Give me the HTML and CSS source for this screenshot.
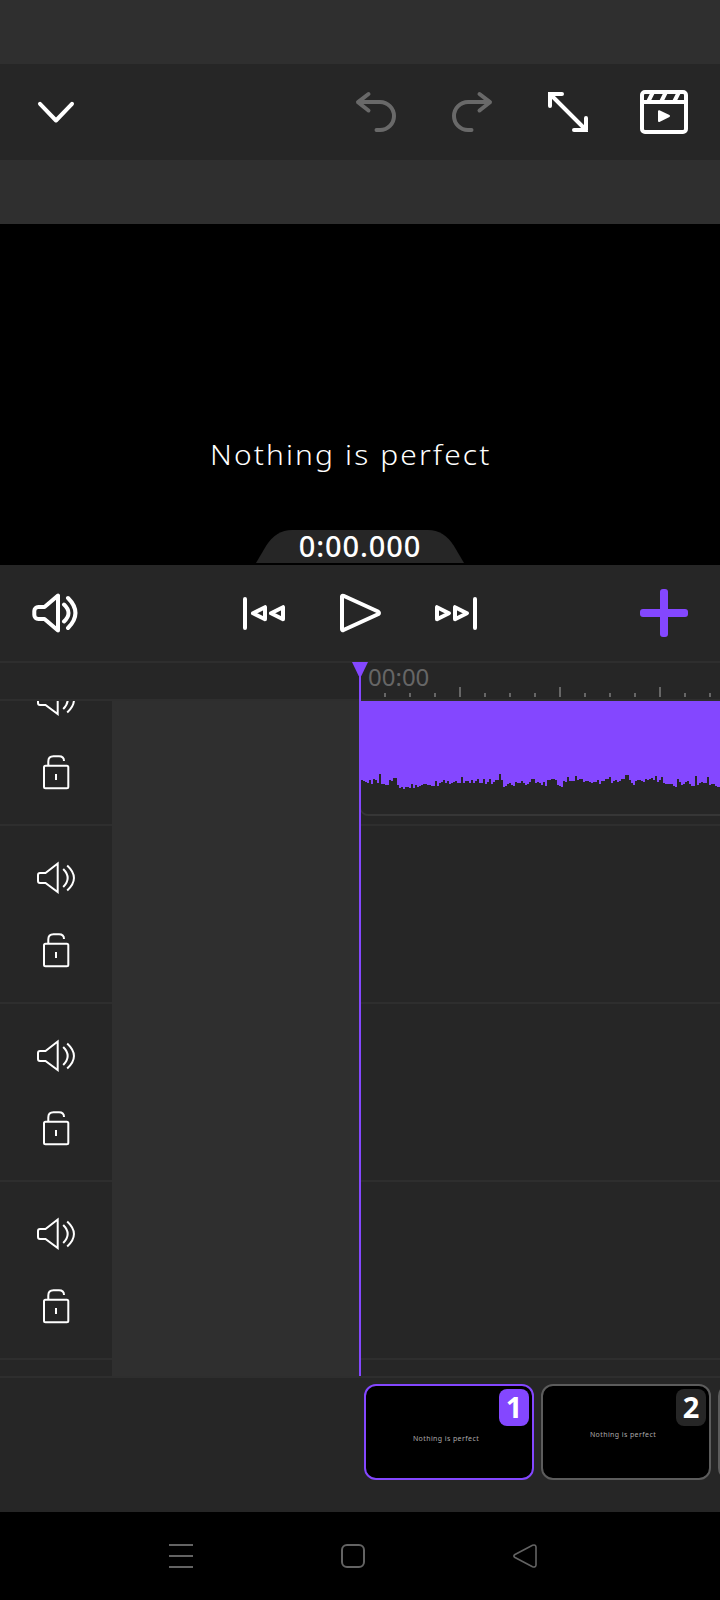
FILE: index.html
```html
<!DOCTYPE html>
<html lang="en">
<head>
    <meta charset="UTF-8">
    <meta name="viewport" content="width=device-width, initial-scale=1.0">
    <title>Video editor</title>
    <link rel="stylesheet" href="styles.css">
</head>
<body>
    <svg class="symbols">
        <symbol id="track-sound" viewBox="0 0 48 48">
            <path d="M25.700 9.500V38L13.500 29H8a2 2 0 0 1-2-2v-6a2 2 0 0 1 2-2h5.500zM31.200 15q9 9 0 18M35.200 11.500q13.500 12.500 0 25"/>
        </symbol>
        <symbol id="track-lock" viewBox="0 0 48 48">
            <rect x="12" y="17.700" width="24.300" height="22.600" rx="1.500"/>
            <path d="M16.300 18v-4.500q0-5.200 5.200-5.200h5.500q5 0 5 4.700M24 26v6"/>
        </symbol>
    </svg>

    <div class="status-bar"></div>

    <header class="toolbar">
        <button class="tool"><svg class="icon" viewBox="0 0 48 48"><path d="M8 15.800L24 32.500L40 15.800"/></svg></button>
        <div class="tool-group">
            <button class="tool disabled"><svg class="icon" viewBox="0 0 48 48"><path d="M16.500 6L6 14.200L16.500 22.500M7 14H28a14 14 0 0 1 0 28H24.500"/></svg></button>
            <button class="tool disabled"><svg class="icon" viewBox="0 0 48 48"><path d="M31.500 6L42 14.200L31.500 22.500M41 14H20a14 14 0 0 0 0 28H23.500"/></svg></button>
            <button class="tool"><svg class="icon sharp" viewBox="0 0 48 48"><path d="M6 18V6H18M6 6L42 42M42 30V42H30"/></svg></button>
            <button class="tool">
                <svg class="icon" viewBox="0 0 48 48">
                    <rect x="2" y="4" width="44" height="40" rx="3"/>
                    <path d="M2 14H46M8.500 13L12.500 5M21.500 13L25.500 5M34.500 13L38.500 5"/>
                    <path class="solid" d="M19 23.200V33L29 28z"/>
                </svg>
            </button>
        </div>
    </header>

    <section class="preview">
        <div class="caption">Nothing is perfect</div>
        <div class="timer">
            <svg class="timer-shape" viewBox="0 0 208 33"><path d="M0 33L10 16Q20 0 36 0H172Q188 0 198 16L208 33z"/></svg>
            <span class="timer-text">0:00.000</span>
        </div>
    </section>

    <section class="controls">
        <button class="tool">
            <svg class="icon" viewBox="0 0 48 48"><path d="M26 6.500V41.500L12.500 30H6.300a4 4 0 0 1-4-4v-4a4 4 0 0 1 4-4h6.200zM32 15.500q9 8.500 0 17M36 9q15 15 0 30"/></svg>
        </button>
        <div class="playback">
            <button class="tool"><svg class="icon" viewBox="0 0 48 48"><path d="M5 10V39M25 18.200V30.200L13 24.200zM43 18.200V30.200L31 24.200z"/></svg></button>
            <button class="tool"><svg class="icon" viewBox="0 0 48 48"><path d="M6 7.500Q6 6.300 7.500 6.800L42 22.500Q44 24 42 25.300L7.500 41Q6 41.500 6 40.300z"/></svg></button>
            <button class="tool"><svg class="icon" viewBox="0 0 48 48"><path d="M43 10V39M23 18.200V30.200L35 24.200zM5 18.200V30.200L17 24.200z"/></svg></button>
        </div>
        <button class="tool add"><svg class="icon" viewBox="0 0 48 48"><rect x="20" width="8" height="48" rx="3"/><rect y="20" width="48" height="8" rx="3"/></svg></button>
    </section>

    <main class="timeline">
        <div class="ruler">
            <span class="ruler-time">00:00</span>
            <svg class="ruler-ticks" id="ticks" width="360" height="10"></svg>
        </div>
        <div class="tracks">
            <div class="track-heads">
                <div class="track-head"><svg class="track-icon"><use href="#track-sound"/></svg><svg class="track-icon"><use href="#track-lock"/></svg></div>
                <div class="track-head"><svg class="track-icon"><use href="#track-sound"/></svg><svg class="track-icon"><use href="#track-lock"/></svg></div>
                <div class="track-head"><svg class="track-icon"><use href="#track-sound"/></svg><svg class="track-icon"><use href="#track-lock"/></svg></div>
                <div class="track-head"><svg class="track-icon"><use href="#track-sound"/></svg><svg class="track-icon"><use href="#track-lock"/></svg></div>
                <div class="track-head"></div>
            </div>
            <div class="lanes">
                <div class="lane">
                    <div class="audio-clip"><svg id="wave" width="360" height="100"></svg></div>
                </div>
                <div class="lane"></div>
                <div class="lane"></div>
                <div class="lane"></div>
                <div class="lane"></div>
            </div>
        </div>
        <div class="playhead"></div>
    </main>

    <section class="scenes">
        <div class="scene active">
            <span class="scene-number">1</span>
            <span class="scene-text">Nothing is perfect</span>
        </div>
        <div class="scene">
            <span class="scene-number">2</span>
            <span class="scene-text higher">Nothing is perfect</span>
        </div>
        <div class="scene"></div>
    </section>

    <nav class="system-nav">
        <svg viewBox="0 0 24 24"><path d="M0 1H24M0 12H24M0 23H24"/></svg>
        <svg viewBox="0 0 24 24"><rect x="1" y="1" width="22" height="22" rx="5"/></svg>
        <svg class="thin" viewBox="0 0 24 24"><path d="M2 10.500L19.500 1.300Q22.800 0.300 23 3V21Q22.800 23.700 19.500 22.700L2 13.500Q-0.300 12 2 10.500z"/></svg>
    </nav>

    <script src="script.js"></script>
</body>
</html>
```
FILE: styles.css
```css
:root {
    --panel: #262626;
    --back: #2f2f2f;
    --line: #2e2e2e;
    --accent: #8447ff;
    --muted: #666;
}

* {
    box-sizing: border-box;
}

body {
    margin: 0;
    width: 720px;
    height: 1600px;
    overflow: hidden;
    background: var(--panel);
    color: #fff;
    font-family: "Noto Sans", "Open Sans", sans-serif;
}

svg {
    display: block;
}

.symbols {
    display: none;
}

.status-bar {
    height: 64px;
    background: var(--back);
}

.toolbar {
    height: 160px;
    padding: 0 8px;
    border-bottom: 64px solid var(--back);
    display: flex;
    justify-content: space-between;
}

.tool-group,
.playback {
    display: flex;
}

.tool {
    width: 96px;
    height: 96px;
    padding: 24px;
    border: none;
    background: none;
    color: #fff;
}

.tool.disabled {
    color: #696969;
}

.icon {
    width: 48px;
    height: 48px;
    fill: none;
    stroke: currentColor;
    stroke-width: 4;
    stroke-linecap: round;
    stroke-linejoin: round;
}

.icon.sharp {
    stroke-linejoin: miter;
}

.icon .solid {
    fill: currentColor;
    stroke-width: 2;
}

.preview {
    height: 341px;
    padding-bottom: 2px;
    background: #000;
    display: flex;
    flex-direction: column;
    justify-content: space-between;
    align-items: center;
}

.caption {
    margin: 210px 18px 0 0;
    font-size: 28px;
    line-height: 40px;
    font-weight: 300;
    letter-spacing: 2px;
    white-space: nowrap;
    transform: scaleX(1.068);
}

.timer {
    display: grid;
    width: 208px;
    height: 33px;
}

.timer-shape,
.timer-text {
    grid-area: 1 / 1;
}

.timer-shape {
    width: 208px;
    height: 33px;
    fill: var(--panel);
}

.timer-text {
    font-size: 29px;
    font-weight: 500;
    line-height: 31px;
    letter-spacing: 0.9px;
    text-align: center;
    z-index: 1;
}

.controls {
    height: 96px;
    padding: 0 8px;
    display: flex;
    justify-content: space-between;
}

.add {
    color: var(--accent);
}

.add .icon {
    fill: currentColor;
    stroke: none;
}

.timeline {
    position: relative;
    height: 717px;
    border-top: 2px solid var(--line);
    border-bottom: 2px solid var(--line);
}

.ruler {
    height: 38px;
    padding-left: 368px;
    border-bottom: 2px solid var(--line);
    display: flex;
    position: relative;
}

.ruler-time {
    font-size: 24px;
    line-height: 27px;
    color: var(--muted);
}

.ruler-ticks {
    position: absolute;
    left: 360px;
    top: 24px;
    fill: var(--muted);
}

.tracks {
    height: 675px;
    overflow: hidden;
    background: var(--back);
    display: grid;
    grid-template-columns: 112px 360px;
    justify-content: space-between;
}

/* tracks are scrolled down, the first one is partly hidden */
.track-heads,
.lanes {
    margin-top: -53px;
    background: var(--panel);
}

.track-head,
.lane {
    height: 178px;
    border-bottom: 2px solid var(--line);
}

.track-head {
    padding: 28px 32px;
    display: flex;
    flex-direction: column;
    gap: 24px;
}

.track-icon {
    width: 48px;
    height: 48px;
    fill: none;
    stroke: #fff;
    stroke-width: 2;
    stroke-linecap: butt;
}

.audio-clip {
    height: 168px;
    padding-top: 53px;
    border: solid #363636;
    border-width: 0 0 2px 1px;
    border-radius: 0 0 0 8px;
    overflow: hidden;
}

#wave {
    fill: var(--accent);
}

.playhead {
    position: absolute;
    left: 359px;
    top: 0;
    width: 2px;
    height: 713px;
    background: var(--accent);
}

.playhead::before {
    content: "";
    position: absolute;
    left: -7px;
    top: -1px;
    width: 16px;
    height: 14px;
    background: var(--accent);
    clip-path: polygon(0 0, 100% 0, 58% 100%, 42% 100%);
}

.scenes {
    height: 134px;
    padding: 6px 0 0 364px;
    display: flex;
    gap: 7px;
    overflow: hidden;
}

.scene {
    position: relative;
    flex: none;
    width: 170px;
    height: 96px;
    border: 2px solid #5c5c5c;
    border-radius: 12px;
    background: #000;
    display: flex;
    justify-content: center;
}

.scene.active {
    border-color: var(--accent);
}

.scene-number {
    position: absolute;
    right: 3px;
    top: 3px;
    width: 30px;
    height: 37px;
    border-radius: 8px;
    background: var(--panel);
    font-size: 29px;
    font-weight: 700;
    line-height: 35px;
    text-align: center;
}

.active .scene-number {
    background: var(--accent);
}

.scene-text {
    margin: 47px 6px 0 0;
    font-size: 7px;
    line-height: 12px;
    letter-spacing: 0.4px;
    color: #aaa;
    white-space: nowrap;
}

.scene-text.higher {
    margin-top: 43px;
}

.system-nav {
    height: 88px;
    padding-left: 169px;
    background: #000;
    display: flex;
    align-items: center;
    gap: 148px;
}

.system-nav svg {
    width: 24px;
    height: 24px;
    fill: none;
    stroke: #636363;
    stroke-width: 2;
}

.system-nav .thin {
    stroke-width: 1.6;
}
```
FILE: script.js
```js
// bottom edge of the audio waveform, one value per 2px bar
const levels = [
    79,80,81,82,79,83,78,79,82,73,83,83,84,84,79,80,77,77,84,87,86,88,86,86,87,83,87,84,86,85,
    84,83,83,84,84,85,85,80,85,82,81,79,82,80,83,82,81,80,82,82,76,82,80,80,82,79,82,80,78,82,
    82,78,83,81,78,83,81,79,79,73,79,86,85,83,82,84,85,81,82,82,80,82,84,83,81,
    78,78,82,81,82,84,81,85,79,79,78,78,79,84,85,86,80,81,76,80,80,80,75,79,78,78,81,80,80,81,
    82,81,81,79,83,80,80,78,78,76,82,80,79,81,80,78,78,74,74,79,82,84,80,79,79,80,81,78,79,78,
    77,79,75,81,79,76,82,83,83,83,83,85,86,78,81,84,83,81,80,83,85,85,75,84,82,81,82,82,76,84,
    83,83,85,86,86
];

let d = 'M0 0';
levels.forEach((level, i) => {
    d += `V${level}H${(i + 1) * 2}`;
});
document.getElementById('wave').innerHTML = `<path d="${d}V0z"/>`;

// every fourth tick is a long one
let ticks = '';
for (let i = 1; i < 15; i++) {
    const h = i % 4 === 0 ? 10 : 4;
    ticks += `<rect x="${i * 25 - 1}" y="${10 - h}" width="2" height="${h}"/>`;
}
document.getElementById('ticks').innerHTML = ticks;
```
